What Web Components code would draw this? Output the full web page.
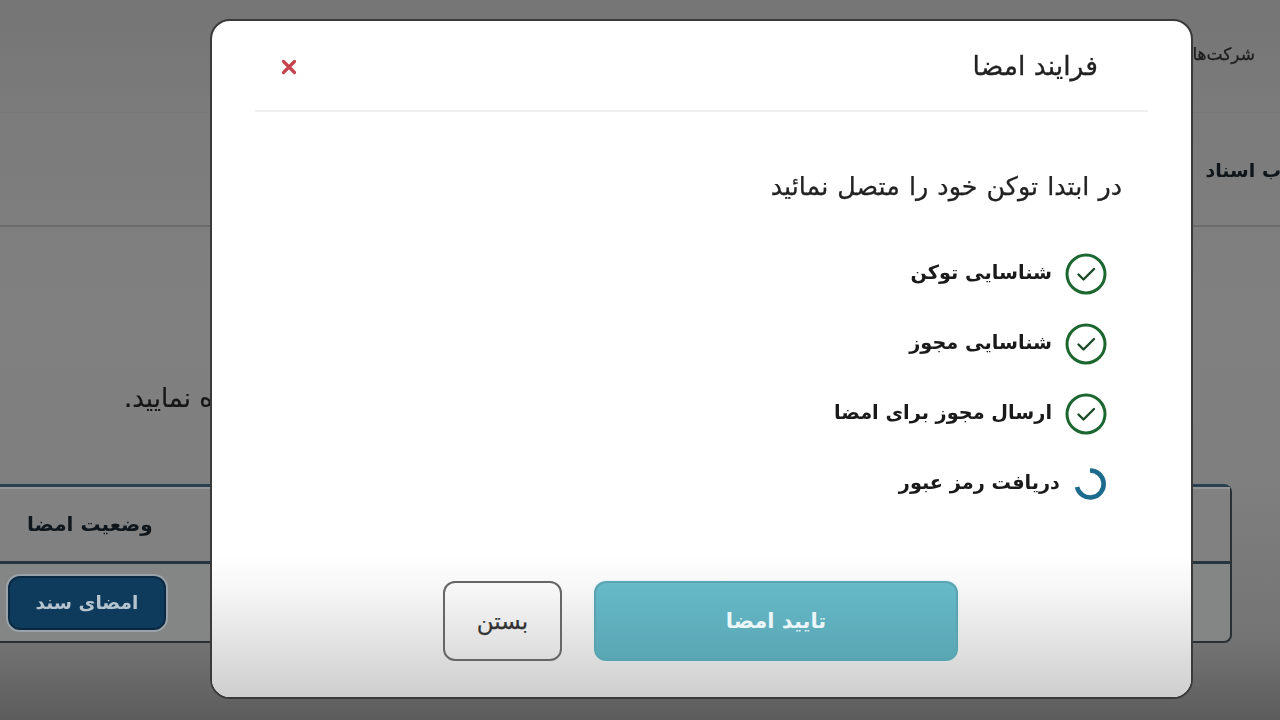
<!DOCTYPE html>
<html lang="fa" dir="rtl">
<head>
<meta charset="utf-8">
<title>فرایند امضا</title>
<style>
html,body{margin:0;height:100%;overflow:hidden;background:#7a7a7a;font-family:"DejaVu Sans","Noto Sans",sans-serif}
</style>
</head>
<body>
<back-page></back-page>
<sign-modal title-text="فرایند امضا" intro="در ابتدا توکن خود را متصل نمائید">
  <step-row state="done">شناسایی توکن</step-row>
  <step-row state="done">شناسایی مجوز</step-row>
  <step-row state="done">ارسال مجوز برای امضا</step-row>
  <step-row state="loading">دریافت رمز عبور</step-row>
</sign-modal>
<script>
function def(name, html, init){
  customElements.define(name, class extends HTMLElement{
    connectedCallback(){
      if(this.shadowRoot) return;
      this.attachShadow({mode:'open'}).innerHTML = html;
      if(init) init(this);
    }
  });
}
def('back-page', `<style>
:host{display:block;width:1280px;height:720px;overflow:hidden;color:#1c1c1c;direction:rtl;background:linear-gradient(180deg,#757575 0,#7b7b7b 110px,#808080 300px,#7f7f7f 480px,#747474 640px,#5c5c5c 720px);filter:blur(.6px)}
.tabs{height:113px;box-sizing:border-box;border-bottom:1px solid #777;padding:44px 25px 0 0;font-size:17px;-webkit-text-stroke:.25px #1c1c1c}
.head{height:114px;box-sizing:border-box;border-bottom:2px solid #6b6b6b;padding:46px 0 0 0;text-indent:-1px;font-weight:700;font-size:19px;color:#0f1518}
.note{height:257px;box-sizing:border-box;padding:156px 1067px 0 0;white-space:nowrap;color:#151515;font-size:26px;-webkit-text-stroke:.2px #151515}
.tbl{margin:0 48px 0 -10px;height:159px;box-sizing:border-box;border:2px solid #2a2f33;border-top:3px solid #28404f;border-radius:8px;display:grid;grid-template-rows:77px 1fr}
.row{display:flex;align-items:center;justify-content:flex-end}
.r1{background:#818181;border-bottom:3px solid #26343d;box-shadow:0 1px 0 #969696,inset 0 2px 0 #959595;padding-left:35px;font-size:20px;font-weight:700;color:#10171c}
.r2{background:#848686;padding-left:16px;border-radius:0 0 7px 7px}
button{all:unset;box-sizing:border-box;width:158px;height:54px;background:#0e3a5c;border:2px solid #0a2a44;box-shadow:0 0 0 2px #9aa3aa;border-radius:12px;color:#b6c4d0;font:700 18.5px "DejaVu Sans",sans-serif;text-align:center;line-height:48px}
</style>
<div class="tabs">شرکت‌ها</div>
<div class="head">ب اسناد</div>
<div class="note">ه نمایید.</div>
<div class="tbl">
  <div class="row r1">وضعیت امضا</div>
  <div class="row r2"><button>امضای سند</button></div>
</div>`);
def('sign-modal', `<style>
:host{position:absolute;left:210px;top:19px;width:983px;height:680px;box-sizing:border-box;background:#fff;border-radius:20px;border:2px solid #3a3a3a;display:flex;flex-direction:column;color:#222;direction:rtl;overflow:hidden;filter:blur(.4px)}
header{height:91px;margin:0 43px;box-sizing:border-box;border-bottom:2px solid #eee;display:flex;align-items:center;justify-content:space-between;padding:0 50px 0 0;font-size:26.6px;-webkit-text-stroke:.3px #222;flex:none}
header .x{width:18px;height:18px;position:relative;left:25px;top:1px}
main{flex:1;padding:0 69px 0 0}
.intro{margin:59px 0 0;font-size:25.4px;line-height:30px;word-spacing:1px;-webkit-text-stroke:.25px #222}
.steps{display:flex;flex-direction:column;gap:30px;margin:53px 15px 0 0}
footer{height:143px;flex:none;box-sizing:border-box;background:linear-gradient(180deg,#fff 0,#f6f6f6 25%,#cecece 100%);display:flex;align-items:flex-start;padding:27px 233px 0 0;gap:32px}
footer span{box-sizing:border-box;height:80px;border-radius:12px;display:flex;align-items:center;justify-content:center;font-size:21px;font-weight:700}
.ok{width:364px;background:linear-gradient(180deg,#66bac8,#5aa6b5);color:#eaf6f8;border:2px solid #5aa3b1;box-shadow:0 0 2px #cfe6ea}
.no{width:119px;border:2px solid #666;color:#333;font-weight:400!important;font-size:23px!important;-webkit-text-stroke:.25px #333}
</style>
<header><span id="t"></span><svg class="x" viewBox="0 0 18 18"><path d="M3.5 3.5 14.5 14.5M14.5 3.5 3.5 14.5" stroke="#c4434d" stroke-width="3.2" stroke-linecap="round"/></svg></header>
<main><p class="intro" id="i"></p><div class="steps"><slot></slot></div></main>
<footer><span class="ok">تایید امضا</span><span class="no">بستن</span></footer>`, el=>{
  el.shadowRoot.getElementById('t').textContent = el.getAttribute('title-text');
  el.shadowRoot.getElementById('i').textContent = el.getAttribute('intro');
});
const CHECK = `<svg width="42" height="42" viewBox="0 0 42 42"><circle cx="21" cy="21" r="19" fill="none" stroke="#1c6630" stroke-width="3"/><path d="M13.5 21.5 18.5 26.5 29 16" fill="none" stroke="#1d4a29" stroke-width="2.4" stroke-linecap="round" stroke-linejoin="round"/></svg>`;
const SPIN = `<svg width="42" height="42" viewBox="0 0 42 42"><path d="M25 7.5A13.5 13.5 0 1 1 12 24" fill="none" stroke="#1d6c8e" stroke-width="4.6"/></svg>`;
def('step-row', `<style>
:host{display:flex;align-items:center;gap:13px;height:40px;font-size:19.3px;font-weight:700;color:#1a1a1a;direction:rtl}
svg{flex:none;display:block}
.t{position:relative;top:-2px}
:host([state=loading]) .t{right:-8px}
</style><span id="ic"></span><span class="t"><slot></slot></span>`, el=>{
  el.shadowRoot.getElementById('ic').innerHTML = el.getAttribute('state')==='done'?CHECK:SPIN;
});
</script>
</body>
</html>
